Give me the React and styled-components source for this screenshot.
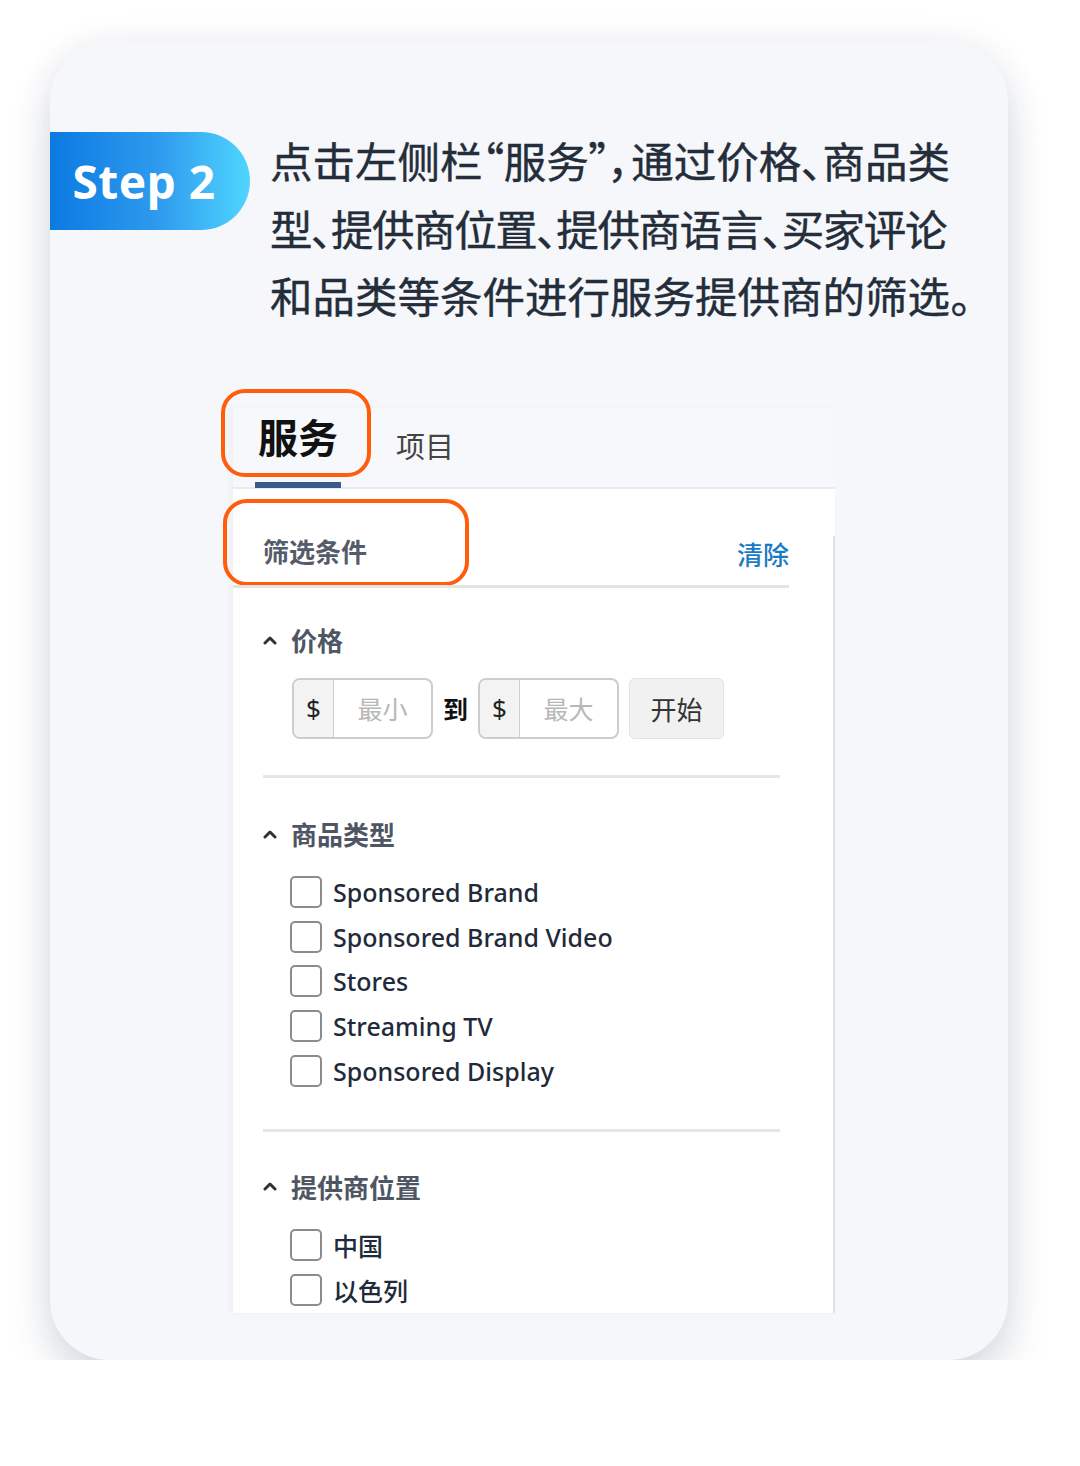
import React from "react";
import styled, { createGlobalStyle } from "styled-components";

const GlobalStyle = createGlobalStyle`
  html, body {
    margin: 0;
    padding: 0;
    background: #ffffff;
  }
  body {
    font-family: "Noto Sans", "Noto Sans CJK SC", sans-serif;
  }
`;

const CJK = `"Noto Sans CJK SC", "Noto Sans", sans-serif`;

const lines = [
  { text: "点击左侧栏“服务”，通过价格、商品类", tight: 0 },
  { text: "型、提供商位置、提供商语言、买家评论", tight: 1.4 },
  { text: "和品类等条件进行服务提供商的筛选。", tight: 0 },
];

const adTypes = [
  "Sponsored Brand",
  "Sponsored Brand Video",
  "Stores",
  "Streaming TV",
  "Sponsored Display",
];

const locations = ["中国", "以色列"];

function Chevron() {
  return (
    <svg width="14" height="10" viewBox="0 0 14 10">
      <polyline
        points="2,8 7,3 12,8"
        fill="none"
        stroke="#2f3338"
        strokeWidth="3"
        strokeLinecap="round"
        strokeLinejoin="round"
      />
    </svg>
  );
}

function CheckRow({ label }) {
  return (
    <Row>
      <Box />
      <RowLabel>{label}</RowLabel>
    </Row>
  );
}

function PriceField({ placeholder }) {
  return (
    <PriceGroup>
      <Addon>$</Addon>
      <PriceInput>{placeholder}</PriceInput>
    </PriceGroup>
  );
}

export default function App() {
  return (
    <>
      <GlobalStyle />
      <Card>
        <Header>
          <Badge>Step 2</Badge>
          <Desc>
            {lines.map((l) => (
              <Line key={l.text} $tight={l.tight}>
                {l.text}
              </Line>
            ))}
          </Desc>
        </Header>

        <ShotWrap>
          <Shot>
            <Tabs>
              <Tab>服务</Tab>
              <TabMuted>项目</TabMuted>
            </Tabs>
            <Body>
              <Column>
                <FilterHead>
                  <span>筛选条件</span>
                  <Clear>清除</Clear>
                </FilterHead>

                <Section $top={36}>
                  <Title>
                    <Chevron />
                    价格
                  </Title>
                  <PriceRow>
                    <PriceField placeholder="最小" />
                    <To>到</To>
                    <PriceField placeholder="最大" />
                    <Go>开始</Go>
                  </PriceRow>
                </Section>

                <Section $top={40}>
                  <Title>
                    <Chevron />
                    商品类型
                  </Title>
                  <List>
                    {adTypes.map((t) => (
                      <CheckRow key={t} label={t} />
                    ))}
                  </List>
                </Section>

                <Section $open>
                  <Title>
                    <Chevron />
                    提供商位置
                  </Title>
                  <List>
                    {locations.map((t) => (
                      <CheckRow key={t} label={t} />
                    ))}
                  </List>
                </Section>
              </Column>
            </Body>
          </Shot>
          <Highlight $left={-12} $top={-19} $w={150} $h={88} />
          <Highlight $left={-10} $top={91} $w={246} $h={87} />
        </ShotWrap>
      </Card>
    </>
  );
}

const Card = styled.div`
  margin: 42px 0 0 50px;
  width: 958px;
  height: 1318px;
  border-radius: 60px;
  background: #f5f7fa;
  box-shadow: 0 26px 44px rgba(50, 70, 100, 0.16), 0 0 34px rgba(50, 70, 100, 0.08);
  overflow: hidden;
`;

const Header = styled.div`
  display: flex;
  align-items: flex-start;
  gap: 20px;
  padding-top: 84px;
`;

const Badge = styled.div`
  flex: none;
  margin-top: 6px;
  width: 200px;
  height: 98px;
  box-sizing: border-box;
  padding-right: 12px;
  border-radius: 0 49px 49px 0;
  background: linear-gradient(90deg, #0b7ae2 0%, #2f9bee 55%, #4fd6ff 100%);
  color: #ffffff;
  font-family: "Noto Sans", sans-serif;
  font-weight: 700;
  font-size: 46px;
  display: flex;
  align-items: center;
  justify-content: center;
  letter-spacing: 0.5px;
`;

const Desc = styled.div`
  display: flex;
  flex-direction: column;
  font-family: ${CJK};
  font-weight: 400;
  font-size: 42.5px;
  line-height: 67.5px;
  color: #242d3a;
  white-space: nowrap;
  font-feature-settings: "palt" 1;
  -webkit-text-stroke: 0.4px #242d3a;
`;

const Line = styled.span`
  letter-spacing: ${(p) => -p.$tight}px;
`;

const ShotWrap = styled.div`
  position: relative;
  margin: 79px 0 0 183px;
  width: 602px;
`;

const Shot = styled.div`
  width: 602px;
  height: 905px;
  overflow: hidden;
  background: #ffffff;
  box-shadow: -3px 0 6px rgba(0, 0, 0, 0.03);
`;

const Tabs = styled.div`
  height: 81px;
  box-sizing: border-box;
  display: flex;
  align-items: flex-start;
  background: #f7f8fb;
  border-bottom: 2px solid #e9eaee;
  padding-left: 22px;
`;

const Tab = styled.div`
  position: relative;
  z-index: 1;
  padding: 2px 3px 20px 3px;
  font-family: ${CJK};
  font-weight: 700;
  font-size: 40px;
  line-height: 52px;
  color: #111111;
  white-space: nowrap;
  border-bottom: 6px solid #3a5a8a;
`;

const TabMuted = styled.div`
  margin: 17px 0 0 55px;
  font-family: ${CJK};
  font-size: 29px;
  line-height: 40px;
  color: #444444;
`;

const Body = styled.div`
  padding-top: 47px;
`;

const Column = styled.div`
  width: 600px;
  height: 800px;
  border-right: 2px solid #e2e2e2;
`;

const FilterHead = styled.div`
  position: relative;
  z-index: 1;
  display: flex;
  justify-content: space-between;
  align-items: center;
  margin-right: 44px;
  padding: 0 0 20px 30px;
  height: 52px;
  box-sizing: border-box;
  border-bottom: 3px solid #e4e4e4;
  font-family: ${CJK};
  font-weight: 700;
  font-size: 26px;
  color: #555c69;
`;

const Clear = styled.span`
  font-weight: 500;
  color: #1b7ac4;
  margin-top: 6px;
`;

const Section = styled.div`
  margin: 0 53px 0 30px;
  padding: ${(p) => p.$top ?? 38}px 0 36px;
  border-bottom: ${(p) => (p.$open ? "none" : "3px solid #e6e6e6")};
`;

const Title = styled.div`
  display: flex;
  align-items: center;
  gap: 14px;
  height: 32px;
  font-family: ${CJK};
  font-weight: 700;
  font-size: 26px;
  color: #4f5663;
`;

const PriceRow = styled.div`
  display: flex;
  align-items: center;
  margin: 22px 0 0 29px;
`;

const PriceGroup = styled.div`
  display: flex;
  height: 61px;
  box-sizing: border-box;
  border: 2px solid #cdcdcd;
  border-radius: 8px;
  overflow: hidden;
`;

const Addon = styled.div`
  width: 39px;
  display: flex;
  align-items: center;
  justify-content: center;
  background: #f3f3f3;
  border-right: 1px solid #cfcfcf;
  font-family: "Noto Sans", sans-serif;
  font-size: 26px;
  color: #222222;
`;

const PriceInput = styled.div`
  width: 97px;
  display: flex;
  align-items: center;
  justify-content: center;
  font-family: ${CJK};
  font-size: 25px;
  color: #b8b8b8;
`;

const To = styled.span`
  margin: 0 10px;
  font-family: ${CJK};
  font-weight: 700;
  font-size: 25px;
  color: #111111;
`;

const Go = styled.div`
  margin-left: 10px;
  width: 95px;
  height: 61px;
  box-sizing: border-box;
  display: flex;
  align-items: center;
  justify-content: center;
  background: #f1f1f1;
  border: 1px solid #e2e2e2;
  border-radius: 6px;
  font-family: ${CJK};
  font-size: 26px;
  color: #333333;
`;

const List = styled.div`
  display: flex;
  flex-direction: column;
  margin: 20px 0 0 27px;
`;

const Row = styled.div`
  display: flex;
  align-items: center;
  gap: 11px;
  height: 44.8px;
`;

const Box = styled.span`
  flex: none;
  width: 32px;
  height: 32px;
  box-sizing: border-box;
  border: 2px solid #8c8c8c;
  border-radius: 5px;
  background: #ffffff;
`;

const RowLabel = styled.span`
  font-family: "Noto Sans", "Noto Sans CJK SC", sans-serif;
  font-weight: 500;
  font-size: 25px;
  color: #1f2a3a;
`;

const Highlight = styled.div`
  position: absolute;
  left: ${(p) => p.$left}px;
  top: ${(p) => p.$top}px;
  width: ${(p) => p.$w}px;
  height: ${(p) => p.$h}px;
  box-sizing: border-box;
  border: 4px solid #ff5c0c;
  border-radius: 24px;
  pointer-events: none;
`;
